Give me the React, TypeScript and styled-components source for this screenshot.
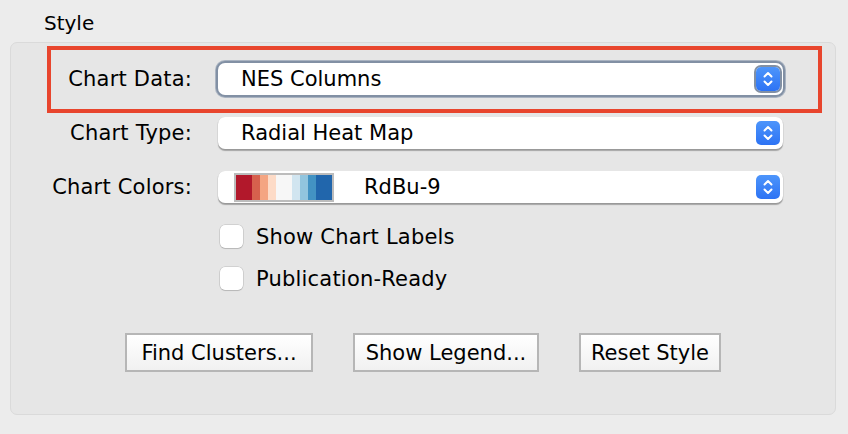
import React from "react";
import styled, { createGlobalStyle } from "styled-components";

const Global = createGlobalStyle`
  html, body { margin: 0; padding: 0; background: #ececec; }
  body { font-family: "DejaVu Sans", "Liberation Sans", sans-serif; color: #000; }
  * { box-sizing: border-box; }
`;

const Root = styled.div`
  position: relative;
  width: 848px;
  height: 434px;
  padding-top: 11px;
  background: #ececec;
`;

const Title = styled.div`
  padding-left: 44px;
  font-size: 20px;
  line-height: 24px;
  height: 31px;
`;

const Panel = styled.div`
  margin: 0 12px 0 10px;
  height: 373px;
  background: #e6e6e6;
  border: 1px solid #dadada;
  border-radius: 7px;
  padding-top: 20px;
  display: flex;
  flex-direction: column;
`;

const Form = styled.div`
  display: grid;
  grid-template-columns: 181px 565px;
  column-gap: 26px;
  row-gap: 22px;
  align-items: center;
`;

const Label = styled.div`
  font-size: 21px;
  letter-spacing: 0.2px;
  text-align: right;
  line-height: 32px;
`;

const Select = styled.div<{ $focused?: boolean }>`
  position: relative;
  height: 32px;
  background: #fff;
  border-radius: 7px;
  display: flex;
  align-items: center;
  padding-left: 23px;
  padding-right: 3px;
  font-size: 21px;
  box-shadow: ${(p) =>
    p.$focused
      ? "0 0 0 2px #8290a4, 0 0 0 3px #a9b3c1"
      : "0 0.5px 0 0.5px rgba(0,0,0,0.08), 0 1.5px 1px rgba(0,0,0,0.28)"};
`;

const SelectText = styled.span`
  flex: 1;
  white-space: nowrap;
`;

const Stepper = styled.div<{ $focused?: boolean }>`
  width: 24px;
  height: 24px;
  border-radius: 5px;
  background: linear-gradient(#4d95fb, #2d73f4);
  display: flex;
  align-items: center;
  justify-content: center;
  box-shadow: ${(p) => (p.$focused ? "0 0 0 2px #8290a4" : "none")};
`;

const Swatch = styled.div`
  display: flex;
  height: 29px;
  border: 2px solid #bcbcbc;
  margin-left: -7px;
  margin-right: 30px;
`;

const Stripe = styled.div<{ $c: string; $w: number }>`
  width: ${(p) => p.$w}px;
  background: ${(p) => p.$c};
`;

const Checks = styled.div`
  display: flex;
  flex-direction: column;
  gap: 19px;
  padding-left: 209px;
  margin-top: 22px;
`;

const CheckRow = styled.label`
  display: flex;
  align-items: center;
  gap: 13px;
  font-size: 21px;
  letter-spacing: 0.2px;
  height: 23px;
`;

const Box = styled.span`
  width: 23px;
  height: 23px;
  border-radius: 5px;
  background: #fff;
  box-shadow: 0 0 0 0.5px rgba(0,0,0,0.18), 0 1px 1px rgba(0,0,0,0.12);
`;

const Buttons = styled.div`
  display: flex;
  justify-content: center;
  gap: 40px;
  margin-top: 43px;
`;

const Button = styled.button<{ $w: number }>`
  width: ${(p) => p.$w}px;
  height: 39px;
  padding: 0;
  border: 2px solid #b6b6b6;
  background: linear-gradient(#ffffff, #f1f1f1);
  font-family: "DejaVu Sans", "Liberation Sans", sans-serif;
  font-size: 21px;
  color: #000;
  border-radius: 0;
  white-space: nowrap;
`;

const Highlight = styled.div`
  position: absolute;
  left: 47px;
  top: 46px;
  width: 775px;
  height: 67px;
  border: 4px solid #e8452d;
  pointer-events: none;
`;

const Chevrons = () => (
  <svg width="14" height="18" viewBox="0 0 14 18" fill="none">
    <path d="M3.5 6.5 L7 3 L10.5 6.5" stroke="#fff" strokeWidth="2" strokeLinecap="round" strokeLinejoin="round" />
    <path d="M3.5 11.5 L7 15 L10.5 11.5" stroke="#fff" strokeWidth="2" strokeLinecap="round" strokeLinejoin="round" />
  </svg>
);

const rdbu: [string, number][] = [
  ["#b2182b", 16],
  ["#d6604d", 8],
  ["#f4a582", 8],
  ["#fddbc7", 8],
  ["#f7f7f7", 16],
  ["#d1e5f0", 8],
  ["#92c5de", 8],
  ["#4393c3", 8],
  ["#2166ac", 16],
];

export default function App() {
  return (
    <Root>
      <Global />
      <Title>Style</Title>
      <Panel>
        <Form>
          <Label>Chart Data:</Label>
          <Select $focused>
            <SelectText>NES Columns</SelectText>
            <Stepper $focused>
              <Chevrons />
            </Stepper>
          </Select>
          <Label>Chart Type:</Label>
          <Select>
            <SelectText>Radial Heat Map</SelectText>
            <Stepper>
              <Chevrons />
            </Stepper>
          </Select>
          <Label>Chart Colors:</Label>
          <Select>
            <Swatch>
              {rdbu.map(([c, w]) => (
                <Stripe key={c} $c={c} $w={w} />
              ))}
            </Swatch>
            <SelectText>RdBu-9</SelectText>
            <Stepper>
              <Chevrons />
            </Stepper>
          </Select>
        </Form>
        <Checks>
          <CheckRow>
            <Box />
            Show Chart Labels
          </CheckRow>
          <CheckRow>
            <Box />
            Publication-Ready
          </CheckRow>
        </Checks>
        <Buttons>
          <Button $w={188}>Find Clusters...</Button>
          <Button $w={186}>Show Legend...</Button>
          <Button $w={142}>Reset Style</Button>
        </Buttons>
      </Panel>
      <Highlight />
    </Root>
  );
}
